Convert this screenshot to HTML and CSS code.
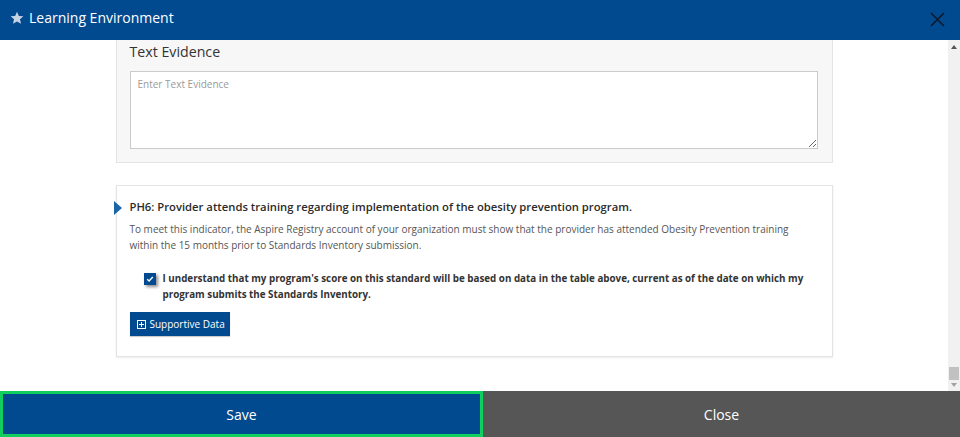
FILE: index.html
```html
<!DOCTYPE html>
<html>
<head>
<meta charset="utf-8">
<link rel="stylesheet" href="styles.css">
</head>
<body>
<header class="topbar">
  <div class="title">
    <svg class="star" width="14" height="14" viewBox="0 0 24 24"><path d="M12 1.2l3.2 7.2 7.8.7-5.9 5.2 1.8 7.7L12 17.9l-6.9 4.1 1.8-7.7L1 9.1l7.8-.7z" fill="#c5d3e4"/></svg>
    <span>Learning Environment</span>
  </div>
  <svg class="close-x" width="15" height="15" viewBox="0 0 15 15"><path d="M1 1L14 14M14 1L1 14" stroke="#0d1a2b" stroke-width="1.6" fill="none"/></svg>
</header>
<main class="viewport">
  <div class="scroll-content">
    <div class="container">
      <section class="card card-evidence">
        <h3 class="evidence-title">Text Evidence</h3>
        <textarea class="evidence-input" placeholder="Enter Text Evidence"></textarea>
      </section>
      <section class="card card-indicator">
        <h4 class="indicator-title">PH6: Provider attends training regarding implementation of the obesity prevention program.</h4>
        <p class="indicator-desc">To meet this indicator, the Aspire Registry account of your organization must show that the provider has attended Obesity Prevention training within the 15 months prior to Standards Inventory submission.</p>
        <div class="ack">
          <span class="checkbox"><svg width="8" height="8" viewBox="0 0 8 8"><path d="M1.2 4.2L3.1 6 6.8 2" stroke="#fff" stroke-width="1.4" fill="none"/></svg></span>
          <span class="ack-label">I understand that my program's score on this standard will be based on data in the table above, current as of the date on which my program submits the Standards Inventory.</span>
        </div>
        <button class="btn-data"><svg width="9" height="9" viewBox="0 0 9 9"><rect x="0.5" y="0.5" width="8" height="8" fill="none" stroke="#fff" stroke-width="1"/><path d="M4.5 2v5M2 4.5h5" stroke="#fff" stroke-width="1"/></svg>Supportive Data</button>
      </section>
    </div>
  </div>
  <div class="scrollbar">
    <span class="arrow up"></span>
    <span class="track"></span>
    <span class="thumb"></span>
    <span class="arrow down"></span>
  </div>
</main>
<footer class="actions">
  <button class="btn-save">Save</button>
  <button class="btn-close">Close</button>
</footer>
</body>
</html>
```
FILE: styles.css
```css
* { box-sizing: border-box; }
html, body { margin: 0; padding: 0; }
body {
  width: 960px;
  height: 437px;
  display: flex;
  flex-direction: column;
  font-family: "Open Sans", "Liberation Sans", sans-serif;
  background: #fff;
  overflow: hidden;
}
.topbar {
  height: 40px;
  flex: 0 0 40px;
  background: #024a90;
  display: flex;
  align-items: center;
  justify-content: space-between;
  padding: 0 14px 0 10px;
}
.title {
  display: flex;
  align-items: center;
  gap: 5px;
  color: #fff;
  font-size: 14px;
  line-height: 20px;
  margin-top: -4px;
}
.star { margin-top: -1px; }
.close-x { margin-top: -2px; margin-right: 1px; }
.viewport {
  flex: 1;
  display: flex;
  overflow: hidden;
}
.scroll-content {
  flex: 1;
  overflow: hidden;
}
.container {
  width: 717px;
  margin: 0 auto;
}
.card {
  border: 1px solid #e4e4e4;
}
.card-evidence {
  background: #f7f7f7;
  border-top: none;
  padding: 2px 14px 13px 13px;
}
.evidence-title {
  margin: 0 0 9px;
  font-size: 14.2px;
  line-height: 20px;
  font-weight: 400;
  color: #333;
}
.evidence-input {
  display: block;
  width: 100%;
  height: 78px;
  border: 1px solid #cbcbcb;
  background: #fff;
  padding: 5px 7px;
  font-family: "Open Sans", "Liberation Sans", sans-serif;
  font-size: 10px;
  line-height: 14px;
  resize: vertical;
  margin: 0;
}
.evidence-input::placeholder { color: #9a9a9a; }
.card-indicator {
  margin-top: 22px;
  background: #fff;
  padding: 12px 14px 20px 13px;
  box-shadow: 0 1px 2px rgba(0,0,0,0.08);
}
.indicator-title {
  position: relative;
  margin: 0;
  font-size: 11.25px;
  line-height: 18px;
  font-weight: 600;
  color: #2b2b2b;
}
.indicator-title::before {
  content: "";
  position: absolute;
  left: -16px;
  top: 3px;
  border-left: 8px solid #1a66a6;
  border-top: 7px solid transparent;
  border-bottom: 7px solid transparent;
}
.indicator-desc {
  margin: 5px 0 0;
  font-size: 10px;
  line-height: 16px;
  color: #555;
}
.ack {
  margin: 18px 0 0 14px;
  display: flex;
  align-items: flex-start;
  gap: 7px;
}
.checkbox {
  flex: 0 0 12px;
  width: 12px;
  height: 12px;
  margin-top: 2px;
  background: #024a90;
  display: flex;
  align-items: center;
  justify-content: center;
  box-shadow: 2px 2px 3px rgba(0,0,0,0.45);
}
.ack-label {
  font-size: 9.8px;
  line-height: 16px;
  font-weight: 700;
  color: #333;
}
.btn-data {
  margin-top: 9px;
  height: 24px;
  width: 100px;
  border: none;
  background: #024a90;
  color: #fff;
  font-family: "Open Sans", "Liberation Sans", sans-serif;
  font-size: 10px;
  white-space: nowrap;
  display: flex;
  align-items: center;
  gap: 4px;
  padding: 0 0 0 7px;
  box-shadow: 0 1px 1px rgba(0,0,0,0.2);
}
.scrollbar {
  width: 12px;
  flex: 0 0 12px;
  background: #f1f1f1;
  display: flex;
  flex-direction: column;
  align-items: center;
  padding: 5px 0 4px;
}
.arrow {
  width: 0;
  height: 0;
  border-left: 3px solid transparent;
  border-right: 3px solid transparent;
}
.arrow.up { border-bottom: 4px solid #555; }
.arrow.down { border-top: 4px solid #a3a3a3; margin-top: 3px; }
.track { flex: 1; }
.thumb {
  width: 10px;
  height: 13px;
  background: #c1c1c1;
}
.actions {
  flex: 0 0 46px;
  height: 46px;
  display: flex;
}
.actions button {
  flex: 1;
  border: none;
  color: #fff;
  font-family: "Open Sans", "Liberation Sans", sans-serif;
  font-size: 14px;
  padding: 0;
}
.btn-save {
  background: #024a90;
  border: 3px solid #10cf5f !important;
}
.btn-close {
  background: #565656;
}
```
